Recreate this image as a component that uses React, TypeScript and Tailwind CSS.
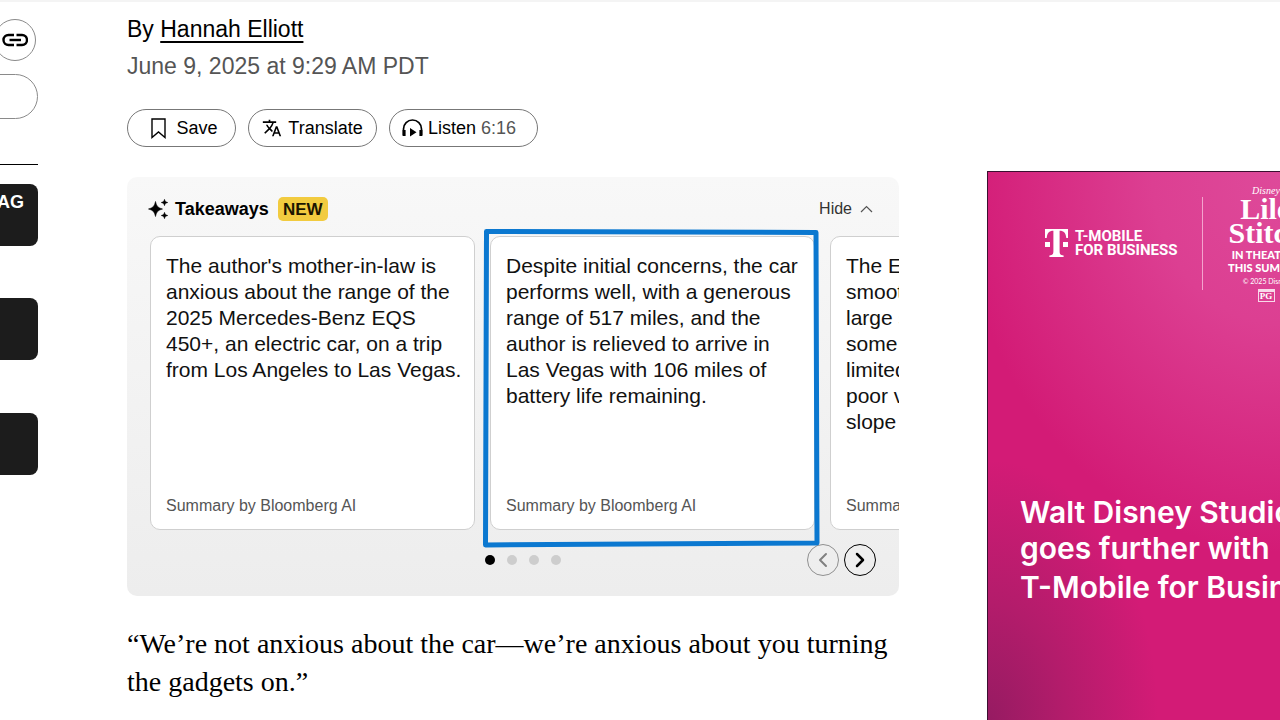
import { ChevronLeft, ChevronRight } from 'lucide-react'
import { MdTranslate } from 'react-icons/md'

const takeaways = [
  "The author's mother-in-law is anxious about the range of the 2025 Mercedes-Benz EQS 450+, an electric car, on a trip from Los Angeles to Las Vegas.",
  'Despite initial concerns, the car performs well, with a generous range of 517 miles, and the author is relieved to arrive in Las Vegas with 106 miles of battery life remaining.',
  'The EQS 450+ offers a\nsmooth, quiet ride and a\nlarge screen, but it has\nsome drawbacks, such as\nlimited rear visibility,\npoor visors and a steep\nslope to the hood.',
]

function LinkIcon() {
  return (
    <svg viewBox="0 0 26 14" className="w-[26px] h-[14px]" fill="none" stroke="#000" strokeWidth="2.4">
      <path d="M12 2H6.500a5 5 0 0 0 0 10H12" />
      <path d="M14.500 2H20a5 5 0 0 1 0 10h-5.500" />
      <path d="M7.500 7h11.500" />
    </svg>
  )
}

function BookmarkIcon() {
  return (
    <svg viewBox="0 0 15 21" className="w-[15px] h-[21px]" fill="none" stroke="#000" strokeWidth="1.4">
      <path d="M1 1h13v18.500l-6.500-5.500L1 19.500z" />
    </svg>
  )
}

function ListenIcon() {
  return (
    <svg viewBox="0 0 21 18" className="w-[21px] h-[18px]">
      <path d="M1.500 16V10a9 9 0 0 1 18 0V16" fill="none" stroke="#000" strokeWidth="1.700" />
      <path d="M.6 11h3v6h-3zM20.400 11h-3v6h3z" />
      <path d="M8 9l6.500 4.200L8 17.400z" />
    </svg>
  )
}

function SparklesIcon() {
  return (
    <svg viewBox="0 0 20 20" className="w-5 h-5">
      <path d="M7.500 2.500c1 4.500 2.500 6.300 7 7.500-4.500 1.200-6 3-7 7.500C6.500 13 5 11.200.5 10c4.500-1.200 6-3 7-7.500z" stroke="#000" strokeWidth=".6" />
      <path d="M16.500.3c.5 2 1.300 2.700 3.300 3.200-2 .5-2.800 1.200-3.300 3.200-.5-2-1.300-2.700-3.300-3.200 2-.5 2.800-1.200 3.300-3.200z" stroke="#000" strokeWidth=".5" />
      <path d="M16.500 13.300c.5 2 1.300 2.700 3.300 3.200-2 .5-2.800 1.200-3.300 3.200-.5-2-1.300-2.700-3.300-3.200 2-.5 2.800-1.200 3.300-3.200z" stroke="#000" strokeWidth=".5" />
    </svg>
  )
}

function TMobileLogo() {
  return (
    <svg viewBox="0 0 23 28" className="w-[23px] h-[28px] shrink-0" fill="#fff">
      <path d="M0 0h23v9h-1.700C20.800 4 19 1.800 14.600 1.800V22c0 3 .8 4.200 4 4.400V28H4.400v-1.600c3.200-.2 4-1.400 4-4.400V1.800C4 1.800 2.200 4 1.700 9H0z" />
      <path d="M0 13h5v5H0zM18 13h5v5h-5z" />
    </svg>
  )
}

function Sidebar() {
  return (
    <aside className="w-[38px] shrink-0 overflow-hidden flex flex-col items-end pt-[17px]">
      <div className="w-[120px] flex justify-end pr-[2px]">
        <button aria-label="Copy link" className="w-[42px] h-[42px] rounded-full border border-[#8a8a8a] flex items-center justify-center">
          <LinkIcon />
        </button>
      </div>
      <button aria-label="Share" className="mt-[13px] w-[120px] h-[45px] rounded-full border border-[#8a8a8a]" />
      <div className="mt-[45px] w-[120px] border-t border-black" />
      <div className="mt-[19px] w-[120px] h-[62px] rounded-lg bg-[#1c1c1c] text-white text-[18px] leading-[36px] font-bold text-right pr-[14px]">
        AG
      </div>
      <div className="mt-[52px] w-[120px] h-[62px] rounded-lg bg-[#1c1c1c]" />
      <div className="mt-[53px] w-[120px] h-[62px] rounded-lg bg-[#1c1c1c]" />
    </aside>
  )
}

function TakeawayCard({ text, highlighted }: { text: string; highlighted?: boolean }) {
  return (
    <li className="relative w-[325px] h-[294px] shrink-0 flex flex-col justify-between rounded-[10px] border border-[#cfcfcf] bg-white pl-[15px] pr-[10px] pt-4 pb-3">
      <p className="text-[21px] leading-[26px] text-[#111] whitespace-pre-line">{text}</p>
      <p className="text-[16px] leading-[22px] text-[#555]">Summary by Bloomberg AI</p>
      {highlighted && (
        <svg viewBox="0 0 337 320" className="absolute -left-2 -top-2 w-[337px] h-[320px] max-w-none" fill="none" stroke="#0b78d0" strokeWidth="5" strokeLinejoin="round">
          <path d="M3.500 2.500 333 3.500 334 314 2.500 316z" />
        </svg>
      )}
    </li>
  )
}

function Takeaways() {
  return (
    <section className="mt-[30px] h-[419px] rounded-[10px] bg-gradient-to-b from-[#f8f8f8] to-[#ededed] overflow-hidden pt-[19px]">
      <div className="flex items-center pl-[21px] pr-[26px] h-[26px]">
        <SparklesIcon />
        <h2 className="ml-[7px] text-[18px] font-bold">Takeaways</h2>
        <span className="ml-[9px] w-[50px] h-6 rounded-[5px] bg-[#f2cb3f] text-[17px] leading-[25px] font-semibold text-center text-[#1c1500]">NEW</span>
        <button className="ml-auto flex items-center gap-2 text-[16px] text-[#333]">
          Hide
          <svg viewBox="0 0 13 8" className="w-[13px] h-2" fill="none" stroke="#555" strokeWidth="1.200">
            <path d="M1 7l5.500-5.500L12 7" />
          </svg>
        </button>
      </div>
      <ul className="mt-[14px] pl-[23px] flex gap-[15px]">
        {takeaways.map((text, index) => (
          <TakeawayCard key={index} text={text} highlighted={index === 1} />
        ))}
      </ul>
      <div className="mt-[14px] pl-[358px] pr-[23px] flex items-center justify-between">
        <div className="flex gap-3">
          <span className="w-[10px] h-[10px] rounded-full bg-black" />
          <span className="w-[10px] h-[10px] rounded-full bg-[#cdcdcd]" />
          <span className="w-[10px] h-[10px] rounded-full bg-[#cdcdcd]" />
          <span className="w-[10px] h-[10px] rounded-full bg-[#cdcdcd]" />
        </div>
        <div className="flex gap-[5px]">
          <button aria-label="Previous" className="w-8 h-8 rounded-full border border-[#909090] text-[#808080] flex items-center justify-center">
            <ChevronLeft className="w-6 h-6" strokeWidth={2} />
          </button>
          <button aria-label="Next" className="w-8 h-8 rounded-full border border-black flex items-center justify-center">
            <ChevronRight className="w-6 h-6" strokeWidth={2.5} />
          </button>
        </div>
      </div>
    </section>
  )
}

function AdBanner() {
  return (
    <aside className="w-[293px] shrink-0 mt-[169px] overflow-hidden border-l border-t border-[#3a1030] text-white bg-[radial-gradient(ellipse_170px_260px_at_0%_100%,#961b62_0%,#b31c6b_45%,transparent_100%),radial-gradient(ellipse_320px_380px_at_100%_0%,#de4a9a_0%,#dc3f92_40%,transparent_100%)] bg-[#d31b76]">
      <div className="mt-[11px] h-[120px] pl-[57px] flex items-center">
        <TMobileLogo />
        <p className="ml-[7px] w-[103px] shrink-0 font-[Roboto] font-bold text-[15px] leading-[14px] whitespace-nowrap">
          T-MOBILE
          <br />
          FOR BUSINESS
        </p>
        <div className="ml-6 w-px h-[93px] shrink-0 bg-[#f3a3cd]" />
        <div className="ml-6 w-[78px] shrink-0 flex flex-col items-center whitespace-nowrap text-center">
          <span className="font-['Liberation_Serif'] italic text-[10px] leading-[12px]">Disney</span>
          <span className="font-['Liberation_Serif'] font-bold text-[30px] leading-[24px]">Lilo</span>
          <span className="font-['Liberation_Serif'] font-bold text-[30px] leading-[24px]">Stitch</span>
          <span className="mt-[3px] font-[Lato] font-black text-[11px] leading-[13px]">
            IN THEATERS
            <br />
            THIS SUMMER
          </span>
          <span className="mt-[3px] font-[Lato] text-[7px] leading-[9px]">© 2025 Disney</span>
          <span className="mt-[3px] w-[17px] border border-white/80 border-t-[3px] font-['Liberation_Serif'] font-bold text-[9px] leading-[9px]">PG</span>
        </div>
      </div>
      <div className="mt-[191px] pl-8 font-[Inter] font-semibold text-[30px] leading-[36px] whitespace-nowrap">
        <p>Walt Disney Studios</p>
        <p>goes further with</p>
        <p className="mt-[3px]">T-Mobile for Business</p>
      </div>
    </aside>
  )
}

export default function App() {
  return (
    <div className="min-h-screen flex overflow-hidden border-t-2 border-[#f4f4f4] bg-white text-black font-['Liberation_Sans',Arial,sans-serif]">
      <Sidebar />
      <main className="ml-[89px] mr-[88px] flex-1 min-w-0 pt-[9px]">
        <p className="text-[23px] leading-[37px]">
          By <a href="#author" className="underline underline-offset-4 decoration-2">Hannah Elliott</a>
        </p>
        <p className="text-[23px] leading-[37px] text-[#555]">June 9, 2025 at 9:29 AM PDT</p>
        <div className="mt-[24px] flex gap-3 text-[18px]">
          <button className="w-[109px] h-[38px] rounded-full border border-[#777] flex items-center justify-center gap-[10px] pl-[6px]">
            <BookmarkIcon />
            Save
          </button>
          <button className="w-[129px] h-[38px] rounded-full border border-[#777] flex items-center justify-center gap-[6px]">
            <MdTranslate className="w-5 h-5" />
            Translate
          </button>
          <button className="w-[149px] h-[38px] rounded-full border border-[#777] flex items-center pl-3 gap-[5px]">
            <ListenIcon />
            Listen <span className="text-[#555]">6:16</span>
          </button>
        </div>
        <Takeaways />
        <p className="mt-[29px] font-['Liberation_Serif',serif] text-[28px] leading-[38px]">
          “We’re not anxious about the car—we’re anxious about you turning the gadgets on.”
        </p>
      </main>
      <AdBanner />
    </div>
  )
}
